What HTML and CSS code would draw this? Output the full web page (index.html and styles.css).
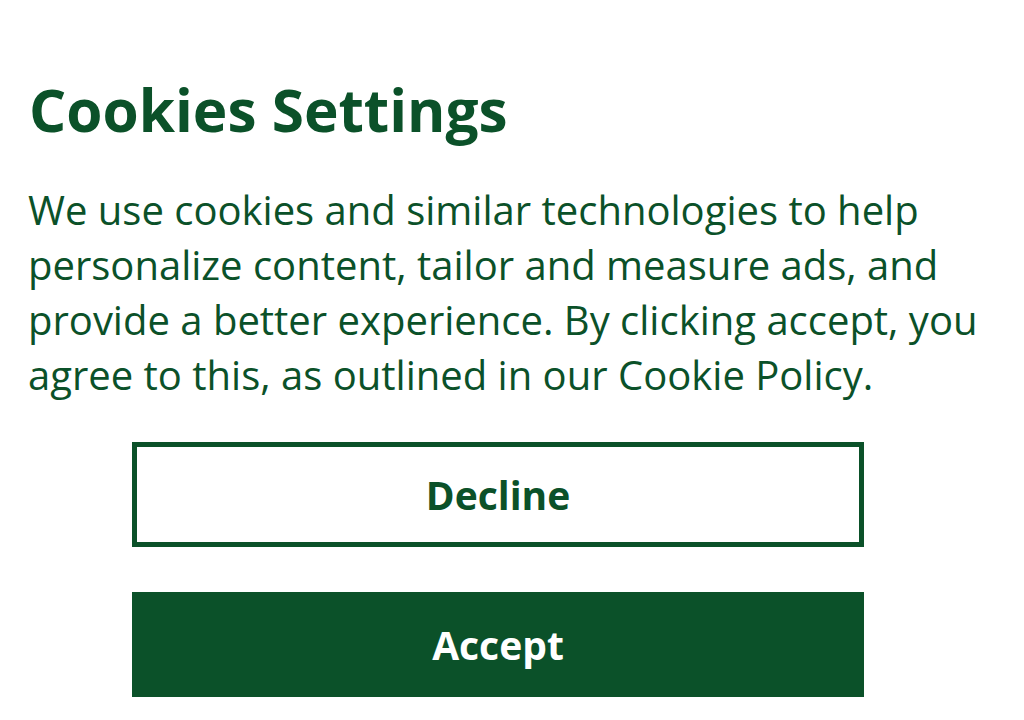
FILE: index.html
```html
<!DOCTYPE html>
<html lang="en">
<head>
<meta charset="utf-8">
<link rel="stylesheet" href="styles.css">
</head>
<body>
<div class="panel">
  <h1 class="title">Cookies Settings</h1>
  <p class="text">We use cookies and similar technologies to help personalize content, tailor and measure ads, and provide a better experience. By clicking accept, you agree to this, as outlined in our Cookie Policy.</p>
  <div class="actions">
    <button class="btn btn-outline">Decline</button>
    <button class="btn btn-solid">Accept</button>
  </div>
</div>
</body>
</html>
```
FILE: styles.css
```css
html, body {
  margin: 0;
  padding: 0;
  background: #ffffff;
}
body {
  font-family: "Open Sans", "Noto Sans", sans-serif;
  color: #0b5129;
}
.panel {
  width: 940px;
  padding: 69px 0 0 28px;
}
.title {
  margin: 0 0 0 1px;
  font-size: 58.5px;
  font-weight: 700;
  line-height: 80px;
}
.text {
  margin: 33px -30px 0 0;
  font-size: 40px;
  line-height: 55px;
}
.actions {
  display: flex;
  flex-direction: column;
  align-items: center;
  gap: 45px;
  margin-top: 40px;
}
.btn {
  width: 732px;
  height: 105px;
  font-family: "Open Sans", "Noto Sans", sans-serif;
  font-size: 39px;
  font-weight: 700;
  box-sizing: border-box;
  border: 5px solid #0b5129;
  padding: 0;
}
.btn-outline {
  background: #ffffff;
  color: #0b5129;
}
.btn-solid {
  background: #0b5129;
  color: #ffffff;
}
```
